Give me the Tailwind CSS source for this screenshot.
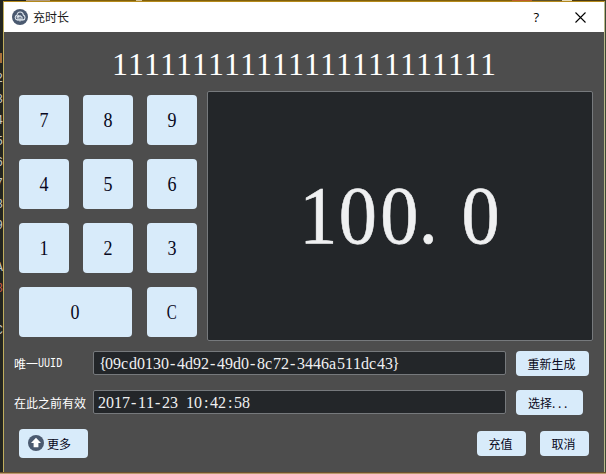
<!DOCTYPE html>
<html lang="zh">
<head>
<meta charset="utf-8">
<title>充时长</title>
<script src="https://cdn.jsdelivr.net/npm/@tailwindcss/browser@4"></script>
</head>
<body class="w-[606px] h-[474px] overflow-hidden bg-[#23251f] font-['Liberation_Serif','Noto_Sans_CJK_SC',serif] [font-kerning:none]">
<div class="flex flex-col w-[606px] h-[474px]">
  <!-- strip of the editor behind the dialog -->
  <div class="flex h-px shrink-0 bg-[#4a3a14]">
    <div class="w-[26px] bg-[#23251f]"></div><div class="w-[24px] bg-[#b09a80]"></div><div class="w-[86px] bg-[#80600c]"></div><div class="w-[6px] bg-[#d5c29a]"></div><div class="w-[370px] bg-[#80600c]"></div><div class="w-[20px] bg-[#bd5a2c]"></div><div class="w-[30px] bg-[#5c512b]"></div><div class="w-[10px] bg-[#e5d9b8]"></div>
  </div>
  <div class="flex flex-1 min-h-0">
    <div class="flex flex-col items-end w-[3px] shrink-0 overflow-hidden pt-[52px] text-[12px] leading-[21px] text-[#c9c9c4] font-['Liberation_Mono',monospace]">
      <div class="h-[10px] w-[2px] mb-[6px] mr-[1px] bg-[#a8703a]"></div>
      <div>2</div><div>3</div><div>4</div><div>5</div><div>6</div><div>7</div><div>8</div><div>9</div><div class="h-[21px]"></div><div>A</div><div class="text-[#c75a4a]">8</div><div class="h-[21px]"></div><div>C</div>
    </div>
    <div class="flex flex-col w-[602px] shrink-0 border-t border-l border-r border-t-[#b58a1c] border-l-[#c0ae5e] border-r-[#b9b98a] bg-[#4d4d4d]">
      <header class="flex items-center h-[30px] shrink-0 bg-white pl-[8px]">
        <svg class="w-[16px] h-[16px]" viewBox="0 0 16 16">
          <circle cx="8" cy="8" r="8" fill="#4b5a70"/>
          <path d="M3.2 8.6C3.2 7 4.3 6.4 5 6.3 5.2 4.3 6.5 3 8.2 3s3 1.3 3.2 3.1c1 .3 1.6 1.2 1.6 2.3 0 1.3-.7 2.3-1.8 2.5H5.1C4 10.700 3.200 9.800 3.200 8.600Z" fill="none" stroke="#dce3ea" stroke-width="1.100"/>
          <path d="M6 11.500V8.200l2-1.500 2 1.500v3.300M8 8.500v4M4.600 8.300l2.200-2.200" fill="none" stroke="#dce3ea" stroke-width="1.100"/>
        </svg>
        <h1 class="ml-[5px] text-[12px] leading-[16px] text-[#1c1c1c] font-['Noto_Sans_CJK_SC',sans-serif]">充时长</h1>
        <div class="ml-auto mr-[36px] text-[13px] leading-[16px] font-medium text-black font-['Open_Sans',sans-serif]">?</div>
        <svg class="w-[11px] h-[11px] mr-[18px]" viewBox="0 0 11 11"><path d="M.5.500l10 10M10.500.500l-10 10" stroke="#000" stroke-width="1.100"/></svg>
      </header>
      <div class="h-[59px] shrink-0 pt-[12px] text-center text-[32px] leading-[40px] text-white">111111111111111111111111</div>
      <main class="flex h-[250px] shrink-0 pl-[15px] pr-[11px]">
        <div class="grid grid-cols-[50px_50px_50px] auto-rows-[50px] gap-[14px] w-[178px] pt-[4px] mr-[10px] text-[20px] leading-[20px] text-[#080820] [&>button]:rounded-[4px] [&>button]:bg-[#d8ebfa] [&_span]:inline-block [&_span]:scale-x-90">
          <button><span>7</span></button><button><span>8</span></button><button><span>9</span></button>
          <button><span>4</span></button><button><span>5</span></button><button><span>6</span></button>
          <button><span>1</span></button><button><span>2</span></button><button><span>3</span></button>
          <button class="col-span-2 w-[113px] pr-[2px]"><span>0</span></button><button><b class="inline-block font-normal scale-x-[.75]">C</b></button>
        </div>
        <div class="w-[386px] shrink-0 flex items-center justify-center rounded-[2px] border border-[#76797c] bg-[#232629]">
          <svg class="w-[206px] h-[90px]" viewBox="0 0 206 90"><g transform="scale(.93 1)"><text x="2.500 45 89.500 131 177" y="72" font-size="82" fill="#eff0f1" stroke="#eff0f1" stroke-width=".6">100.0</text></g></svg>
        </div>
      </main>
      <section class="grid grid-cols-[79px_413px_73px] auto-rows-[25px] gap-y-[14px] pt-[10px] pl-[10px] shrink-0 text-[12px] leading-[16px] font-['Noto_Sans_CJK_SC',sans-serif]">
        <label class="flex items-center text-white whitespace-nowrap">唯一<span class="inline-block origin-left scale-x-[.84] font-['Liberation_Mono',monospace]">UUID</span></label>
        <div class="h-[24px] rounded-[2px] border border-[#76797c] bg-[#232629] pl-[3px]">
          <svg class="w-[306px] h-[22px] font-['Liberation_Serif',serif]" viewBox="0 0 306 22"><text y="17" font-size="16" fill="#eff0f1" x="2 8 16 24 32 40 48 56 64 73 80 88 96 104 113 120 128 136 144 153 160 168 176 184 193 200 208 216 224 232 240 248 256 264 272 280 288 295">{09cd0130-4d92-49d0-8c72-3446a511dc43}</text></svg>
        </div>
        <button class="ml-[10px] w-[73px] rounded-[4px] bg-[#d8ebfa] text-[#080820] pr-[2px]">重新生成</button>
        <label class="flex items-center text-white whitespace-nowrap">在此之前有效</label>
        <div class="h-[24px] rounded-[2px] border border-[#76797c] bg-[#232629] pl-[3px]">
          <svg class="w-[306px] h-[22px] font-['Liberation_Serif',serif]" viewBox="0 0 306 22"><text y="17" font-size="16" fill="#eff0f1" x="1 9 17 25 34 41 49 58 65 73 81 89 97 107 113 121 131 137 145">2017-11-23 10:42:58</text></svg>
        </div>
        <button class="ml-[10px] w-[67px] rounded-[4px] bg-[#d8ebfa] text-left pl-[12px] text-[#080820]">选择<span class="tracking-[2.700px]">...</span></button>
      </section>
      <footer class="flex pt-[14px] pl-[15px] pr-[15px] text-[12px] leading-[16px] text-[#080820] font-['Noto_Sans_CJK_SC',sans-serif]">
        <button class="flex items-center w-[69px] h-[29px] rounded-[4px] bg-[#d8ebfa] pl-[9px]">
          <svg class="w-[16px] h-[16px] mr-[3px] -mt-[2px]" viewBox="0 0 16 16"><circle cx="8" cy="8" r="8" fill="#4b5a70"/><path d="M8 2.800L13 8h-2.600v4.300H5.600V8H3Z" fill="#fff"/></svg>更多</button>
        <button class="ml-auto mt-[2px] w-[49px] h-[25px] rounded-[4px] bg-[#d8ebfa] pr-[2px]">充值</button>
        <button class="ml-[14px] mt-[2px] w-[49px] h-[25px] rounded-[4px] bg-[#d8ebfa] pr-[2px]">取消</button>
      </footer>
    </div>
    <div class="flex-1 bg-[#3d4a35]"></div>
  </div>
  <div class="h-[2px] shrink-0 border-t border-[#6e5230] bg-[#b99a6c]"></div>
</div>
</body>
</html>
